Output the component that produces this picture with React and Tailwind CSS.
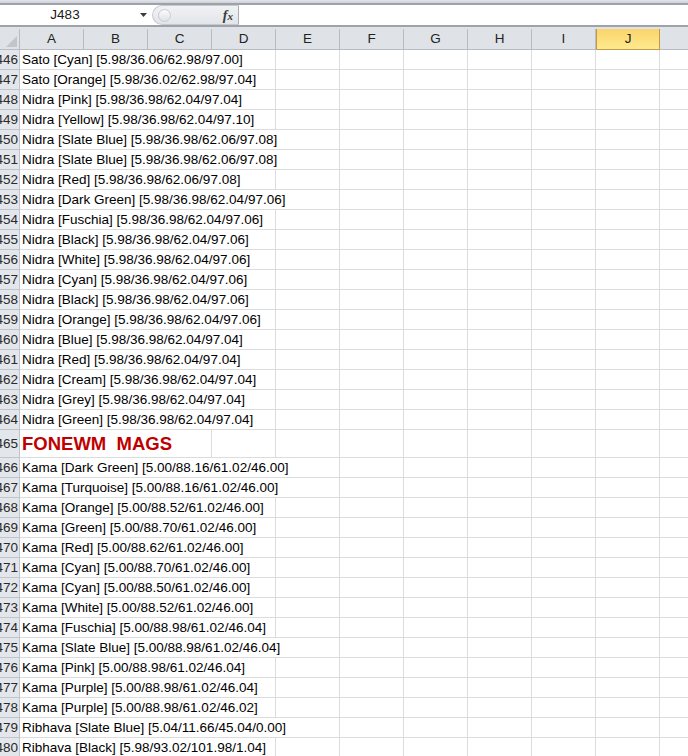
import React from 'react';

const rows = [
    [446, 'Sato [Cyan] [5.98/36.06/62.98/97.00]', 4],
    [447, 'Sato [Orange] [5.98/36.02/62.98/97.04]', 4],
    [448, 'Nidra [Pink] [5.98/36.98/62.04/97.04]', 4],
    [449, 'Nidra [Yellow] [5.98/36.98/62.04/97.10]', 4],
    [450, 'Nidra [Slate Blue] [5.98/36.98/62.06/97.08]', 5],
    [451, 'Nidra [Slate Blue] [5.98/36.98/62.06/97.08]', 5],
    [452, 'Nidra [Red] [5.98/36.98/62.06/97.08]', 4],
    [453, 'Nidra [Dark Green] [5.98/36.98/62.04/97.06]', 5],
    [454, 'Nidra [Fuschia] [5.98/36.98/62.04/97.06]', 4],
    [455, 'Nidra [Black] [5.98/36.98/62.04/97.06]', 4],
    [456, 'Nidra [White] [5.98/36.98/62.04/97.06]', 4],
    [457, 'Nidra [Cyan] [5.98/36.98/62.04/97.06]', 4],
    [458, 'Nidra [Black] [5.98/36.98/62.04/97.06]', 4],
    [459, 'Nidra [Orange] [5.98/36.98/62.04/97.06]', 4],
    [460, 'Nidra [Blue] [5.98/36.98/62.04/97.04]', 4],
    [461, 'Nidra [Red] [5.98/36.98/62.04/97.04]', 4],
    [462, 'Nidra [Cream] [5.98/36.98/62.04/97.04]', 4],
    [463, 'Nidra [Grey] [5.98/36.98/62.04/97.04]', 4],
    [464, 'Nidra [Green] [5.98/36.98/62.04/97.04]', 4],
    [465, 'FONEWM\u00a0\u00a0MAGS', 3, true],
    [466, 'Kama [Dark Green] [5.00/88.16/61.02/46.00]', 5],
    [467, 'Kama [Turquoise] [5.00/88.16/61.02/46.00]', 5],
    [468, 'Kama [Orange] [5.00/88.52/61.02/46.00]', 4],
    [469, 'Kama [Green] [5.00/88.70/61.02/46.00]', 4],
    [470, 'Kama [Red] [5.00/88.62/61.02/46.00]', 4],
    [471, 'Kama [Cyan] [5.00/88.70/61.02/46.00]', 4],
    [472, 'Kama [Cyan] [5.00/88.50/61.02/46.00]', 4],
    [473, 'Kama [White] [5.00/88.52/61.02/46.00]', 4],
    [474, 'Kama [Fuschia] [5.00/88.98/61.02/46.04]', 4],
    [475, 'Kama [Slate Blue] [5.00/88.98/61.02/46.04]', 5],
    [476, 'Kama [Pink] [5.00/88.98/61.02/46.04]', 4],
    [477, 'Kama [Purple] [5.00/88.98/61.02/46.04]', 4],
    [478, 'Kama [Purple] [5.00/88.98/61.02/46.02]', 4],
    [479, 'Ribhava [Slate Blue] [5.04/11.66/45.04/0.00]', 5],
    [480, 'Ribhava [Black] [5.98/93.02/101.98/1.04]', 4],
];

const letters = ['A', 'B', 'C', 'D', 'E', 'F', 'G', 'H', 'I', 'J', ''];

const FormulaBar = () => (
    <div className="flex flex-col">
        <div className="h-[3px] bg-gradient-to-b from-[#e3e6ea] to-[#cdd1d6]" />
        <div className="h-[2px] bg-[#9ea3aa]" />
        <div className="flex h-5 bg-white">
            <div className="flex w-[152px] items-center">
                <span className="w-[130px] text-center text-[13.5px] text-[#1a1a1a]">J483</span>
                <svg width="8" height="5" viewBox="0 0 8 5" className="ml-[10px]">
                    <path d="M0 0 L7 0 L3.5 4 Z" fill="#3b3b3b" />
                </svg>
            </div>
            <div className="flex h-5 w-[87px] items-center rounded-l-full border border-r-[#a9adb3] border-[#c6cad0] bg-gradient-to-b from-[#f1f2f4] to-[#e2e5e9]">
                <div className="ml-[5px] h-[13px] w-[13px] rounded-full border border-[#c9ccd1] bg-gradient-to-b from-[#fafbfc] to-[#dfe2e6]" />
                <span className="ml-auto mr-[5px] font-['Liberation_Serif',serif] text-[14px] font-bold italic text-[#3a3a3a]">
                    f<span className="text-[11px]">x</span>
                </span>
            </div>
            <div className="flex-1 bg-white" />
        </div>
        <div className="h-[2px] bg-[#9ea3aa]" />
        <div className="h-[2px] bg-[#dfe2e6]" />
    </div>
);

const HeaderRow = () => (
    <div className="flex h-[21px]">
        <div className="relative w-5 shrink-0 border-b border-r border-[#b7bcc3] bg-[#dfe2e7]">
            <svg width="11" height="11" viewBox="0 0 11 11" className="absolute bottom-[2px] right-[2px]">
                <path d="M11 0 L11 11 L0 11 Z" fill="#c2c6cc" />
            </svg>
        </div>
        {letters.map((l, i) =>
            l === 'J' ? (
                <div
                    key={i}
                    className="flex w-16 shrink-0 items-center justify-center border border-t-0 border-[#c29b48] bg-gradient-to-b from-[#f9d46b] to-[#ffea8e] text-[13.5px] text-[#222]"
                >
                    {l}
                </div>
            ) : (
                <div
                    key={i}
                    className="flex w-16 shrink-0 items-center justify-center border-b border-r border-[#b7bcc3] bg-[#dfe2e7] text-[13.5px] text-[#222]"
                >
                    {l}
                </div>
            )
        )}
    </div>
);

const Row = ({ num, text, span, heading }) => {
    const rest = letters.length - span;
    return (
        <div className={`flex ${heading ? 'h-[28px]' : 'h-5'}`}>
            <div className="flex w-5 shrink-0 items-center justify-end overflow-hidden border-b border-r border-[#c0c5cc] bg-[#e3e6ea] pr-[1px] pt-[1px] text-[13.5px] text-[#2a2a2a]">
                <span className="whitespace-nowrap">{num}</span>
            </div>
            <div
                className="flex shrink-0 items-center whitespace-nowrap border-b border-r border-[#dadcdd] pl-[2px] pt-[1px]"
                style={{ width: span * 64 }}
            >
                {heading ? (
                    <span className="text-[18.5px] font-bold text-[#c00000]">{text}</span>
                ) : (
                    <span className="text-[13.5px] text-black">{text}</span>
                )}
            </div>
            {Array.from({ length: rest }).map((_, i) => (
                <div key={i} className="w-16 shrink-0 border-b border-r border-[#dadcdd]" />
            ))}
        </div>
    );
};

export default function App() {
    return (
        <div className="h-[756px] w-[688px] overflow-hidden bg-white font-['Liberation_Sans',Arial,sans-serif]">
            <FormulaBar />
            <HeaderRow />
            {rows.map(([num, text, span, heading]) => (
                <Row key={num} num={num} text={text} span={span} heading={heading} />
            ))}
        </div>
    );
}
